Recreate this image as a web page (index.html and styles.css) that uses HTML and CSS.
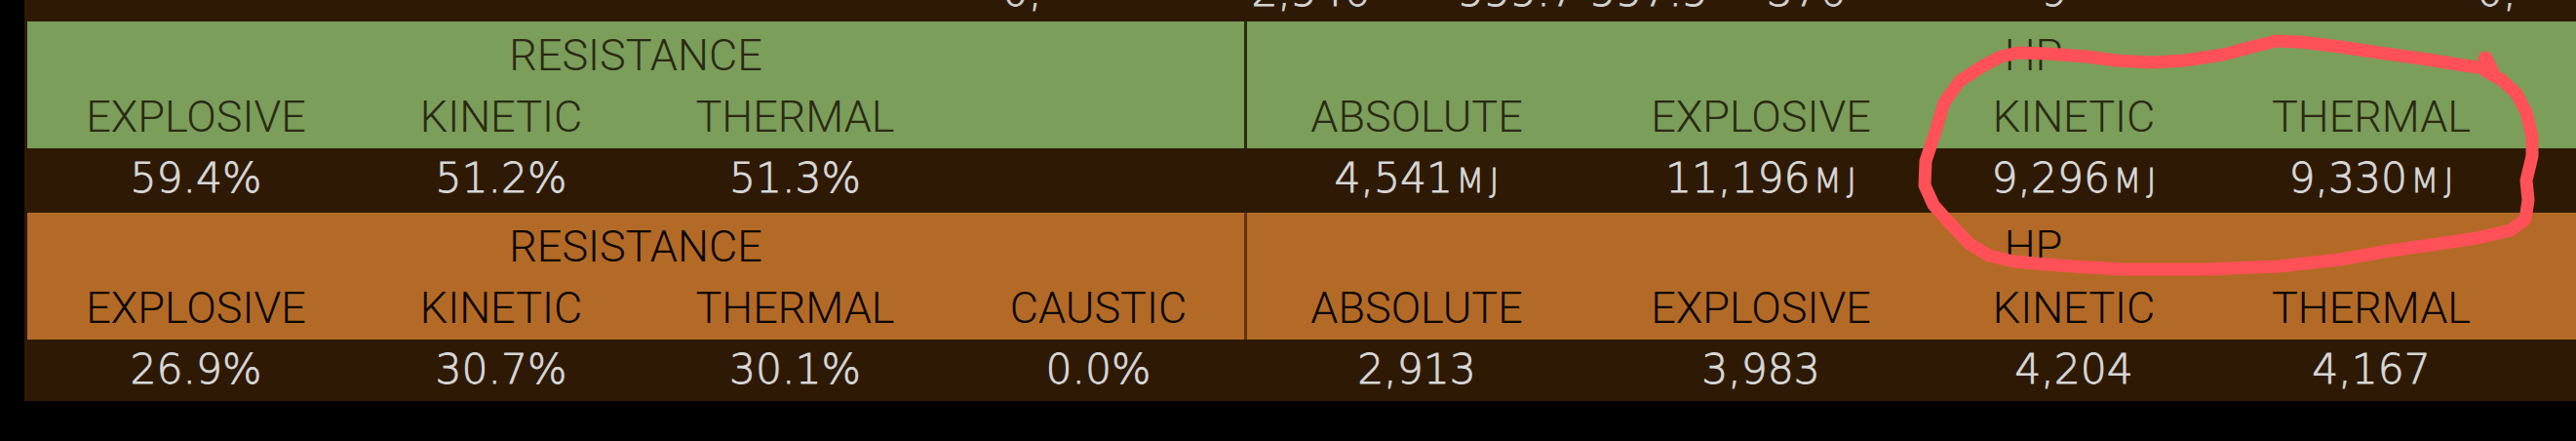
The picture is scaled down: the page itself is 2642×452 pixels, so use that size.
FILE: index.html
```html
<!DOCTYPE html>
<html lang="en">
<head>
    <meta charset="UTF-8">
    <meta name="viewport" content="width=device-width, initial-scale=1.0">
    <title>Defence stats</title>
    <link rel="stylesheet" href="styles.css">
</head>
<body>
    <div class="page">
        <div class="table">
            <!-- fim da linha anterior, quase toda fora da tela -->
            <div class="strip">
                <span class="frag f1">0,</span>
                <span class="frag f2">2,546</span>
                <span class="frag f3">555.7 557.5</span>
                <span class="frag f4">376</span>
                <span class="frag f5">9</span>
                <span class="frag f6">0,</span>
            </div>

            <!-- Escudo -->
            <div class="band shield">
                <div class="group res">
                    <div class="group-title">RESISTANCE</div>
                    <div class="cols res-cols">
                        <span>EXPLOSIVE</span>
                        <span>KINETIC</span>
                        <span>THERMAL</span>
                        <span></span>
                    </div>
                </div>
                <div class="group hp">
                    <div class="group-title">HP</div>
                    <div class="cols hp-cols">
                        <span>ABSOLUTE</span>
                        <span>EXPLOSIVE</span>
                        <span>KINETIC</span>
                        <span>THERMAL</span>
                        <span></span>
                    </div>
                </div>
            </div>
            <div class="values first">
                <div class="cols res-cols">
                    <span>59.4%</span>
                    <span>51.2%</span>
                    <span>51.3%</span>
                    <span></span>
                </div>
                <div class="cols hp-cols">
                    <span>4,541<span class="unit">MJ</span></span>
                    <span>11,196<span class="unit">MJ</span></span>
                    <span>9,296<span class="unit">MJ</span></span>
                    <span>9,330<span class="unit">MJ</span></span>
                    <span></span>
                </div>
            </div>

            <!-- Casco -->
            <div class="band hull">
                <div class="group res">
                    <div class="group-title">RESISTANCE</div>
                    <div class="cols res-cols">
                        <span>EXPLOSIVE</span>
                        <span>KINETIC</span>
                        <span>THERMAL</span>
                        <span>CAUSTIC</span>
                    </div>
                </div>
                <div class="group hp">
                    <div class="group-title">HP</div>
                    <div class="cols hp-cols">
                        <span>ABSOLUTE</span>
                        <span>EXPLOSIVE</span>
                        <span>KINETIC</span>
                        <span>THERMAL</span>
                        <span>CAUSTIC</span>
                    </div>
                </div>
            </div>
            <div class="values">
                <div class="cols res-cols">
                    <span>26.9%</span>
                    <span>30.7%</span>
                    <span>30.1%</span>
                    <span>0.0%</span>
                </div>
                <div class="cols hp-cols">
                    <span>2,913</span>
                    <span>3,983</span>
                    <span>4,204</span>
                    <span>4,167</span>
                    <span>2,913</span>
                </div>
            </div>
        </div>

        <!-- risco vermelho feito à mão por cima -->
        <svg class="scribble" width="2642" height="452" viewBox="0 0 2642 452">
            <polyline fill="none" stroke="#ff5157" stroke-width="13" stroke-linecap="round" stroke-linejoin="round"
                points="2548,70 2520,66 2490,61 2440,54 2400,48 2360,43 2335,42 2310,48 2280,56 2240,62 2207,64 2170,62 2140,58 2100,55 2070,54 2052,58 2033,68 2010,83 1994,105 1985,135 1975,165 1974,190 1983,210 2000,229 2020,250 2040,262 2065,268 2110,272 2176,276 2260,276 2337,273 2400,266 2444,258 2500,250 2541,244 2575,236 2590,225 2593,205 2591,185 2597,160 2597,140 2591,115 2581,96 2566,82 2548,72"/>
            <polyline fill="none" stroke="#ff5157" stroke-width="15" stroke-linecap="round" points="2549,60 2556,74"/>
        </svg>
    </div>
</body>
</html>
```

FILE: styles.css
```css
body {
    margin: 0;
    padding: 0;
    background-color: #000;
}
.page {
    position: relative;
    height: 452px;
    padding-left: 25px;
    overflow: hidden;
}
.table {
    width: max-content;
    padding-left: 3px;
    background-color: #2e1a04;
}
.strip {
    display: flex;
    align-items: flex-end;
    height: 13px;
    padding-bottom: 9px;
    overflow: hidden;
    font-family: "DejaVu Sans", sans-serif;
    font-weight: 200;
    font-size: 42.5px;
    line-height: 43px;
    color: #d4d4d4;
    -webkit-text-stroke: 0.8px #d4d4d4;
}
.frag {
    white-space: pre;
}
.f1 { margin-left: 1000px; }
.f2 { margin-left: 215px; }
.f3 { margin-left: 90px; }
.f4 { margin-left: 60px; }
.f5 { margin-left: 200px; }
.f6 { margin-left: 420px; }

.band {
    display: flex;
    height: 130px;
    font-family: "Roboto", sans-serif;
    font-weight: 300;
    font-size: 45px;
    line-height: 45px;
}
.shield {
    background-color: #7b9e5b;
    color: #2b2a13;
}
.hull {
    background-color: #b36a26;
    color: #0b0600;
}
.group {
    padding-top: 12px;
}
.group-title {
    text-align: center;
    height: 45px;
    margin-bottom: 18px;
}
.hp {
    border-left: 3px solid #2c2a14;
}
.hull .hp {
    border-left-color: #5e3510;
}
.cols {
    display: grid;
    text-align: center;
    white-space: nowrap;
}
.res-cols {
    grid-template-columns: 346px 280px 323px 299px;
}
.hp-cols {
    grid-template-columns: 348px 358px 284px 326px 297px;
}
.values {
    display: flex;
    height: 54px;
    padding-top: 9px;
    font-family: "DejaVu Sans", sans-serif;
    font-weight: 200;
    font-size: 42.5px;
    line-height: 43px;
    color: #d8d8d8;
    -webkit-text-stroke: 0.8px #d8d8d8;
}
.values.first {
    height: 57px;
}
.values .hp-cols {
    margin-left: 3px;
}
.unit {
    font-size: 34px;
    letter-spacing: 5px;
    margin-left: 3px;
    margin-right: -5px;
}
.scribble {
    position: absolute;
    top: 0;
    left: 0;
    pointer-events: none;
}
```
